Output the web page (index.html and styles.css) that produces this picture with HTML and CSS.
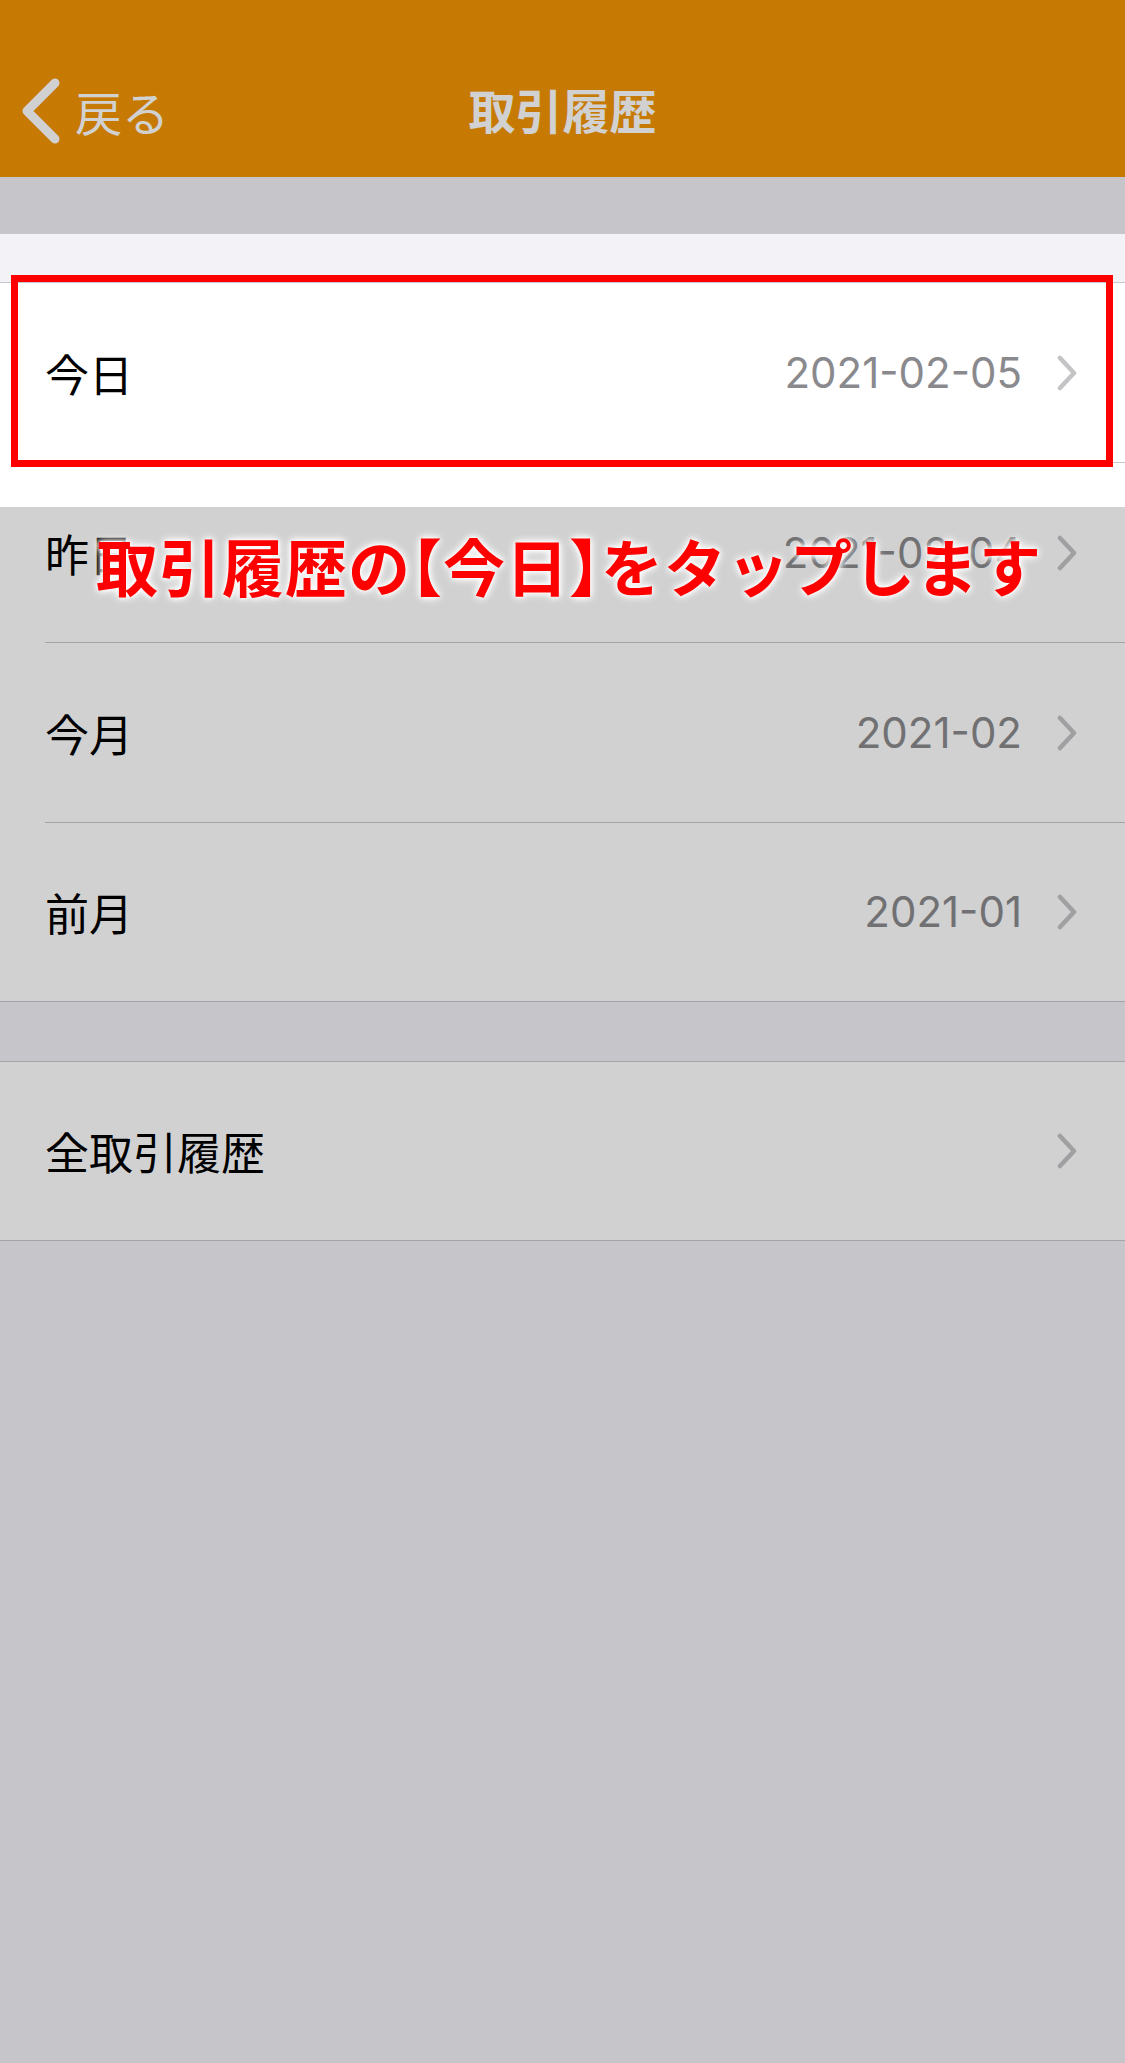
FILE: index.html
```
<!DOCTYPE html>
<html lang="ja">
<head>
<meta charset="utf-8">
<title>取引履歴</title>
<link rel="stylesheet" href="styles.css">
</head>
<body>
<div class="page">
  <header class="header">
    <div class="nav">
      <div class="back">
        <svg class="back-icon" width="44" height="72" viewBox="0 0 44 72">
          <path d="M36 8 L8 36 L36 64" fill="none" stroke="#ffffff" stroke-width="9" stroke-linecap="round" stroke-linejoin="round"/>
        </svg>
        <span class="back-text">戻る</span>
      </div>
      <div class="title">取引履歴</div>
    </div>
  </header>

  <div class="spacer-top"></div>

  <section class="group">
    <div class="row">
      <div class="row-inner">
        <span class="label">今日</span>
        <span class="value">2021-02-05</span>
        <svg class="chev" width="22" height="36" viewBox="0 0 22 36"><path d="M4 3 L18 18 L4 33" fill="none" stroke="#c4c4c7" stroke-width="4.5" stroke-linecap="round" stroke-linejoin="round"/></svg>
      </div>
    </div>
    <div class="row">
      <div class="row-inner">
        <span class="label">昨日</span>
        <span class="value">2021-02-04</span>
        <svg class="chev" width="22" height="36" viewBox="0 0 22 36"><path d="M4 3 L18 18 L4 33" fill="none" stroke="#c4c4c7" stroke-width="4.5" stroke-linecap="round" stroke-linejoin="round"/></svg>
      </div>
    </div>
    <div class="row">
      <div class="row-inner">
        <span class="label">今月</span>
        <span class="value">2021-02</span>
        <svg class="chev" width="22" height="36" viewBox="0 0 22 36"><path d="M4 3 L18 18 L4 33" fill="none" stroke="#c4c4c7" stroke-width="4.5" stroke-linecap="round" stroke-linejoin="round"/></svg>
      </div>
    </div>
    <div class="row">
      <div class="row-inner last">
        <span class="label">前月</span>
        <span class="value">2021-01</span>
        <svg class="chev" width="22" height="36" viewBox="0 0 22 36"><path d="M4 3 L18 18 L4 33" fill="none" stroke="#c4c4c7" stroke-width="4.5" stroke-linecap="round" stroke-linejoin="round"/></svg>
      </div>
    </div>
  </section>

  <div class="spacer-mid"></div>

  <section class="group">
    <div class="row">
      <div class="row-inner last">
        <span class="label">全取引履歴</span>
        <span class="value"></span>
        <svg class="chev" width="22" height="36" viewBox="0 0 22 36"><path d="M4 3 L18 18 L4 33" fill="none" stroke="#c4c4c7" stroke-width="4.5" stroke-linecap="round" stroke-linejoin="round"/></svg>
      </div>
    </div>
  </section>

  <div class="spotlight"></div>
  <div class="highlight-box"></div>
  <div class="annotation">取引履歴の<span class="half">【</span>今日<span class="half">】</span>をタップします</div>
</div>
</body>
</html>
```

FILE: styles.css
```
html, body {
  margin: 0;
  padding: 0;
}

body {
  background: #f2f2f7;
  font-family: "Noto Sans CJK JP", "Noto Sans", sans-serif;
  overflow: hidden;
}

.page {
  position: relative;
  width: 1125px;
  min-height: 2063px;
  background: #f2f2f7;
}

.header {
  background: #f29506;
  height: 177px;
  padding-top: 46px;
  box-sizing: border-box;
}

.nav {
  position: relative;
  height: 131px;
  display: flex;
  align-items: center;
  justify-content: center;
}

.back {
  position: absolute;
  left: 19px;
  top: 0;
  height: 100%;
  display: flex;
  align-items: center;
  gap: 12px;
}

.back-icon {
  display: block;
  margin-top: -2px;
}

.back-text {
  color: #ffffff;
  font-size: 47px;
  line-height: 1;
  margin-top: -2px;
}

.title {
  color: #ffffff;
  font-size: 47px;
  font-weight: 700;
  line-height: 1;
  margin-top: -6px;
}

.spacer-top {
  height: 105px;
}

.spacer-mid {
  height: 59px;
}

.group {
  background: #ffffff;
  border-top: 1px solid #c8c7cc;
  border-bottom: 1px solid #c8c7cc;
}

.row {
  padding-left: 45px;
}

.row-inner {
  height: 179px;
  border-bottom: 1px solid #c8c7cc;
  display: flex;
  align-items: center;
  padding-right: 47px;
}

.row-inner.last {
  height: 178px;
  border-bottom: none;
}

.label {
  font-size: 44px;
  color: #000000;
  line-height: 1;
  flex: 1;
}

.value {
  font-family: "Inter", "Roboto", sans-serif;
  font-size: 42px;
  color: #8a8a8e;
  line-height: 1;
  margin-right: 34px;
}

.chev {
  display: block;
}

.spotlight {
  position: absolute;
  left: 0;
  top: 234px;
  width: 1125px;
  height: 273px;
  box-shadow: 0 0 0 3000px rgba(0, 0, 0, 0.18);
  pointer-events: none;
}

.highlight-box {
  position: absolute;
  left: 11px;
  top: 275px;
  width: 1102px;
  height: 192px;
  box-sizing: border-box;
  border: 7px solid #ff0000;
}

.annotation {
  position: absolute;
  left: 96px;
  top: 534px;
  font-size: 62px;
  line-height: 62px;
  font-weight: 700;
  letter-spacing: 1px;
  color: #ff0000;
  white-space: nowrap;
  text-shadow: 0 0 4px #ffffff, 0 0 8px #ffffff, 0 0 10px rgba(255,255,255,0.9);
}

.half {
  font-feature-settings: "halt" 1;
}
```
